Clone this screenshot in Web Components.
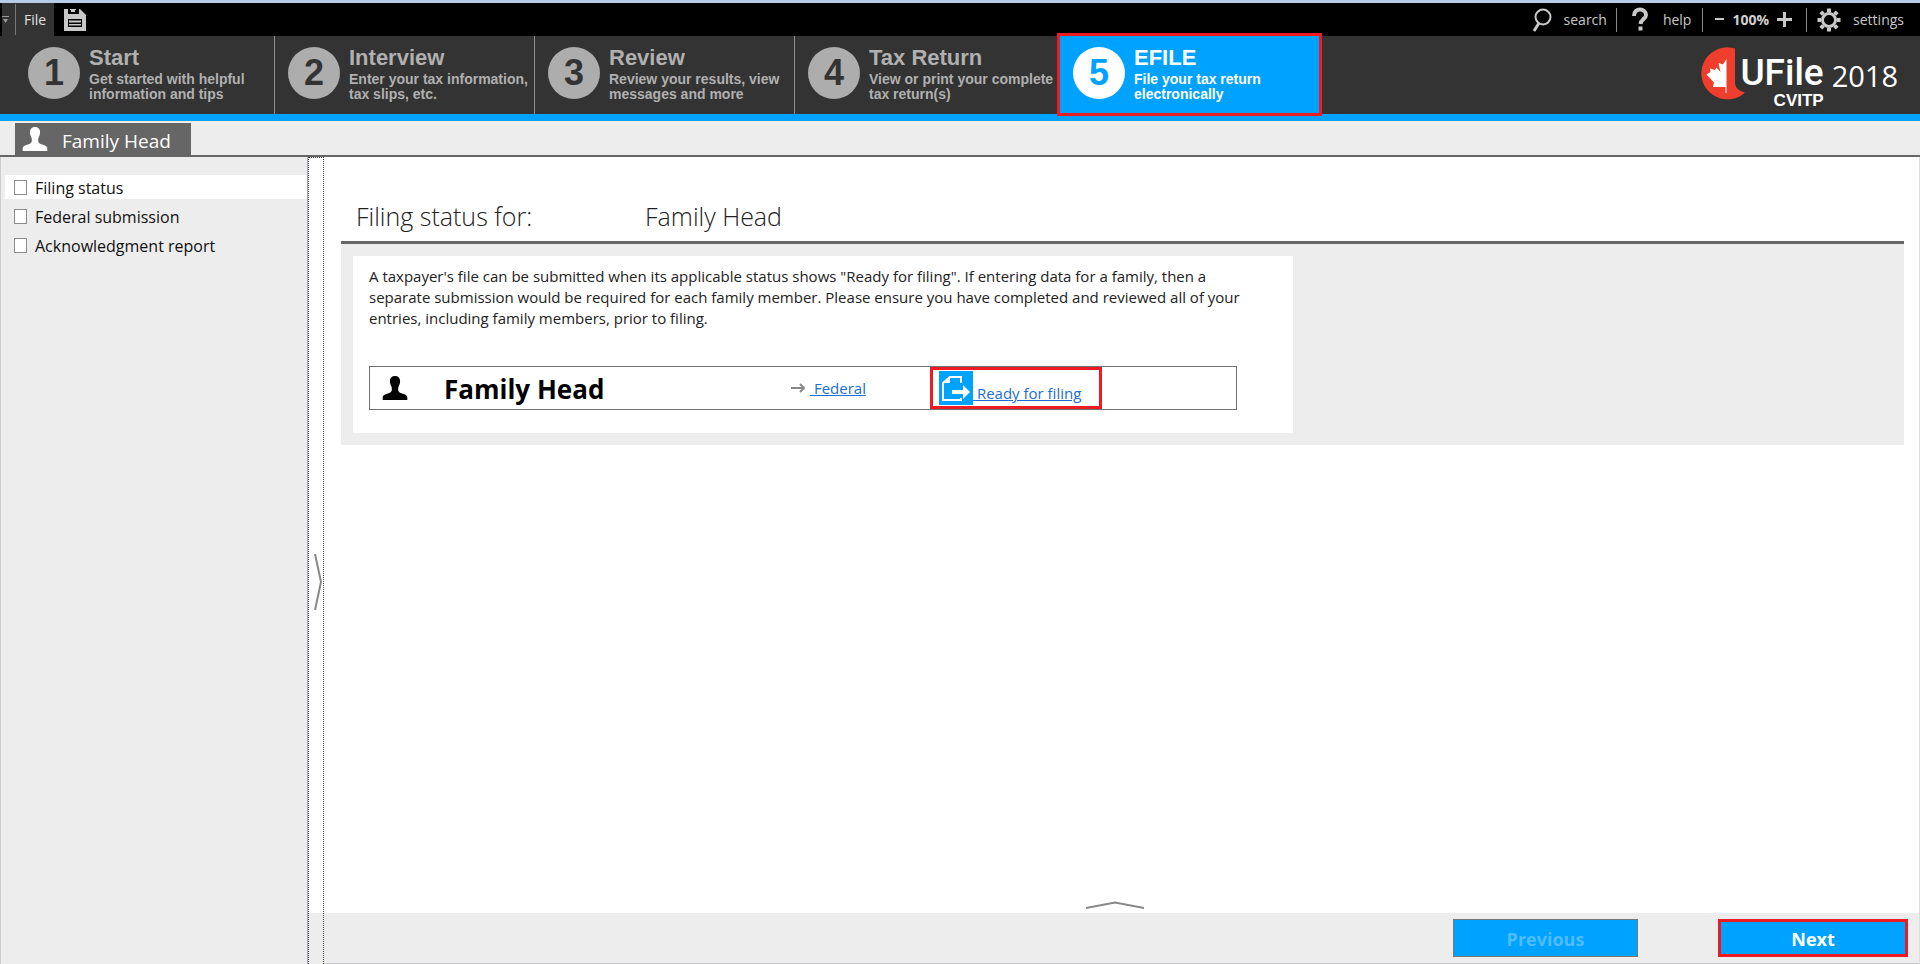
<!DOCTYPE html>
<html lang="en">
<head>
<meta charset="utf-8">
<title>UFile CVITP 2018</title>
<style>
  body { margin: 0; font-family: "Open Sans", "Noto Sans", sans-serif; font-size: 15px; color: #222; background: #fff; }
</style>
</head>
<body>
<ufile-app></ufile-app>

<script>
const define = (name, html) => customElements.define(name, class extends HTMLElement {
  connectedCallback() {
    if (this.shadowRoot) return;
    const template = document.createElement('template');
    template.innerHTML = typeof html === 'function' ? html(this) : html;
    this.attachShadow({ mode: 'open' }).append(template.content.cloneNode(true));
  }
});

/* Head-and-shoulders silhouette, takes the current text colour */
define('person-icon', `
  <style>:host { display: block; width: 26px; height: 26px; } svg { display: block; }</style>
  <svg width="26" height="26" viewBox="0 0 26 26" fill="currentColor" aria-hidden="true">
    <path d="M13 1C9.800 1 7.900 3 7.900 6c0 2 .6 3.700 1.300 5 .5.900.7 2.200.6 4-.1 1.600-1.200 2.500-3.300 3.200C3 19.400.7 20 .7 22.500V25h24.600v-2.500c0-2.500-2.300-3.100-5.800-4.300-2.100-.7-3.200-1.600-3.300-3.200-.1-1.800.1-3.100.6-4 .7-1.300 1.300-3 1.300-5 0-3-1.900-5-5.100-5z"/>
  </svg>`);

define('top-bar', `
  <style>
    :host { display: flex; align-items: center; justify-content: space-between; height: 33px; background: #000; color: #c8c8c8; font-size: 14px; line-height: 20px; border-top: 3px solid #b8cee8; }
    div { display: flex; align-items: center; height: 100%; }
    button { display: flex; align-items: center; border: 0; padding: 0; margin: 0; background: none; color: inherit; font: inherit; height: 31px; }
    .menu { background: #333; margin-left: 2px; }
    .more { width: 14px; height: 31px; border-right: 1px solid #777; }
    .file { padding: 0 8px; color: #e0e0e0; }
    .save { margin-left: 9px; }
    .right { padding-right: 16px; }
    .sep { width: 1px; height: 24px; background: #888; }
    .search { gap: 12px; margin-right: 9px; }
    .help { gap: 14px; margin: 0 11px 0 14px; }
    .zoom { margin: 0 14px 0 12px; gap: 8px; }
    .zoom b { color: #d0d0d0; }
    .settings { gap: 11px; margin-left: 9px; }
    svg { display: block; }
  </style>
  <div>
    <div class="menu">
      <button class="more" aria-label="More"><svg width="10" height="10" viewBox="0 0 10 10" fill="#999"><path d="M0 1h7v1H0zM1 4h5L3.500 8z"/></svg></button>
      <button class="file">File</button>
    </div>
    <button class="save" aria-label="Save">
      <svg width="24" height="24" viewBox="0 0 24 24"><path fill="#c8c8c8" d="M1 1h16l6 6v16H1z"/><path fill="#000" d="M5 1h11v5H5zM5 11h14v8H5z"/><path fill="#c8c8c8" d="M7 1h6v1H7zM8 2h4v2H8zM6 12.500h12v2H6zM6 16h12v1.500H6z"/></svg>
    </button>
  </div>
  <div class="right">
    <button class="search"><svg width="20" height="26" viewBox="0 0 20 26" fill="none" stroke="#c8c8c8"><circle cx="11" cy="10" r="7.500" stroke-width="2"/><path d="M7 16L2 24" stroke-width="3"/></svg>search</button>
    <span class="sep"></span>
    <button class="help"><svg width="18" height="26" viewBox="0 0 18 26" fill="none" stroke="#c8c8c8" stroke-width="4"><path d="M3 9C3 0 15 1 15 8c0 4-5 4-5.500 9"/><path d="M7.500 21.500h4"/></svg>help</button>
    <span class="sep"></span>
    <div class="zoom">
      <button aria-label="Zoom out"><svg width="9" height="15" viewBox="0 0 9 15"><path fill="#c8c8c8" d="M0 6h9v2H0z"/></svg></button>
      <b>100%</b>
      <button aria-label="Zoom in"><svg width="15" height="15" viewBox="0 0 15 15"><path fill="#c8c8c8" d="M6 0h3v6h6v3H9v6H6V9H0V6h6z"/></svg></button>
    </div>
    <span class="sep"></span>
    <button class="settings"><svg width="26" height="24" viewBox="-13 -12 26 24" fill="none" stroke="#c8c8c8"><circle r="6.500" stroke-width="3"/><path stroke-width="4" d="M0-8v-3.500M0 8v3.500M-8 0h-3.500M8 0h3.500M-5.600-5.600l-2.600-2.600M5.600-5.600l2.600-2.600M-5.600 5.600l-2.600 2.600M5.600 5.600l2.600 2.600"/></svg>settings</button>
  </div>`);

define('nav-step', el => `
  <style>
    :host { display: block; flex: 0 1 260px; box-sizing: border-box; border-left: 1px solid #8a8f96; color: #b0b0b0; --disc: #adadad; --digit: #333; }
    :host(:first-child) { border-left-color: transparent; }
    :host([active]) { flex-basis: 259px; margin: 0 0 1px 6px; background: #00a2ff; color: #fff; --disc: #fff; --digit: #00a2ff; border-left-color: #00a2ff; outline: 3px solid #ed1c24; z-index: 1; position: relative; }
    a { display: flex; gap: 9px; height: 100%; box-sizing: border-box; padding: 11px 0 0 13px; color: inherit; text-decoration: none; font-family: "Liberation Sans", Arial, sans-serif; font-weight: bold; }
    :host([active]) a { padding-left: 12px; }
    .num { flex: none; width: 52px; height: 52px; border-radius: 50%; background: var(--disc); color: var(--digit); font-size: 36px; line-height: 52px; text-align: center; }
    .title { display: block; font-size: 22px; line-height: 22px; padding-bottom: 3px; }
    .note { display: block; font-size: 14px; line-height: 15px; }
  </style>
  <a href="#"><span class="num">${el.getAttribute('number')}</span>
  <span><span class="title">${el.getAttribute('label')}</span><span class="note"><slot></slot></span></span></a>`);

define('ufile-logo', `
  <style>
    :host { display: flex; color: #fff; padding-top: 11px; }
    svg { display: block; flex: none; margin-right: -5px; }
    .name { display: flex; flex-direction: column; align-items: flex-end; padding-top: 6px; }
    .brand { font: 500 37px/39px Roboto, sans-serif; }
    .sub { font: bold 17px/17px "Liberation Sans", sans-serif; }
    .year { font-size: 29px; line-height: 40px; padding: 9px 0 0 8px; }
  </style>
  <svg width="46" height="53" viewBox="0 0 46 53" aria-hidden="true">
    <path fill="#f03e2d" d="M36 1.500A26 26 0 1 0 46 45.500Q36 43 36 36z"/>
    <path fill="#fff" d="M27.500 12L24 17.500 19.500 16 21.500 25 17.500 20.500 16 23 11 21.500 11.500 25 7.500 27.500 15 35.500 14 40 26.500 40 26.500 46h1z"/>
  </svg>
  <div class="name"><span class="brand">UFile</span><span class="sub">CVITP</span></div>
  <span class="year">2018</span>`);

define('step-nav', `
  <style>
    :host { display: flex; justify-content: space-between; height: 78px; background: #333; border-bottom: 7px solid #00a2ff; padding: 0 22px 0 14px; }
    nav { display: flex; flex: 1; }
  </style>
  <nav aria-label="Steps">
    <nav-step number="1" label="Start">Get started with helpful information and tips</nav-step>
    <nav-step number="2" label="Interview">Enter your tax information, tax slips, etc.</nav-step>
    <nav-step number="3" label="Review">Review your results, view messages and more</nav-step>
    <nav-step number="4" label="Tax Return">View or print your complete tax return(s)</nav-step>
    <nav-step number="5" label="EFILE" active>File your tax return electronically</nav-step>
  </nav>
  <ufile-logo></ufile-logo>`);

define('member-tabs', `
  <style>
    :host { display: flex; height: 34px; padding-left: 15px; align-items: flex-end; background: #ededed; border-bottom: 2px solid #666; }
    button { display: flex; align-items: center; gap: 14px; width: 176px; height: 32px; padding: 0 0 0 7px; border: 0; background: #666; color: #fff; font: 19px/26px "Open Sans", sans-serif; white-space: nowrap; }
    person-icon { flex: none; }
    span { padding-top: 4px; }
  </style>
  <button><person-icon></person-icon><span>Family Head</span></button>`);

define('check-item', `
  <style>
    :host { display: block; }
    label { display: flex; align-items: center; height: 24px; padding-left: 9px; gap: 8px; font-size: 16px; line-height: 24px; color: #111; }
    :host([selected]) label { background: #fff; }
    input { appearance: none; flex: none; margin: 0; width: 13px; height: 15px; border: 1px solid #8c8c8c; background: #fff; }
    span { padding-top: 1px; }
  </style>
  <label><input type="checkbox"><span><slot></slot></span></label>`);

define('side-menu', `
  <style>
    :host { display: flex; flex-direction: column; gap: 5px; flex: none; width: 302px; padding: 18px 0 0 4px; background: #ededed; border-left: 1px solid #ccc; border-right: 1px solid #a0a6ae; }
  </style>
  <check-item selected>Filing status</check-item>
  <check-item>Federal submission</check-item>
  <check-item>Acknowledgment report</check-item>`);

define('pane-splitter', `
  <style>
    :host { display: flex; flex: none; align-items: center; justify-content: flex-end; width: 14px; border: 1px dotted #444; border-bottom: 0; background: linear-gradient(to top, #ededed 51px, #fff 51px); }
    button { border: 0; padding: 0; margin: 0; background: none; display: block; }
    svg { display: block; }
    .wrap { padding-top: 42px; }
  </style>
  <div class="wrap"><button aria-label="Collapse menu"><svg width="10" height="58" viewBox="0 0 10 58" fill="none" stroke="#888" stroke-width="2"><path d="M2 1L8 29 2 57"/></svg></button></div>`);

define('family-row', `
  <style>
    :host { display: grid; grid-template-columns: 74px 347px 142px 1fr; box-sizing: border-box; width: 868px; max-width: 100%; height: 44px; border: 1px solid #707070; align-items: center; }
    person-icon { color: #000; margin-left: 12px; }
    strong { font-size: 26px; line-height: 36px; padding-top: 2px; color: #000; }
    a { color: #1a6fd0; font-size: 15px; line-height: 20px; }
    .fed { display: flex; align-items: center; gap: 5px; }
    .status { justify-self: start; display: flex; height: 36px; padding: 0 18px 0 6px; text-decoration: none; outline: 3px solid #ed1c24; }
    .status svg { margin-top: 1px; }
    .status span { text-decoration: underline; padding-top: 13px; }
  </style>
  <person-icon></person-icon>
  <strong>Family Head</strong>
  <span class="fed"><svg width="14" height="10" viewBox="0 0 14 10" fill="none" stroke="#888" stroke-width="2"><path d="M0 5h12M9 1l4 4-4 4"/></svg><a href="#">&nbsp;Federal</a></span>
  <a class="status" href="#">
    <svg width="34" height="34" viewBox="0 0 34 34" aria-hidden="true">
      <path fill="#00a2ff" d="M0 0h34v34H0z"/>
      <path fill="none" stroke="#fff" stroke-width="2" d="M22 12V6h-11L4 12v17h18v-2"/>
      <path fill="#fff" d="M11 5v7H3zM13 19h11v-5l7 7-7 7v-5H13z"/>
    </svg><span>&nbsp;Ready for filing</span></a>`);

define('filing-page', `
  <style>
    :host { display: flex; flex: 1; min-width: 0; flex-direction: column; border-right: 1px solid #ddd; }
    main { flex: 1; padding: 37px 15px 0 17px; }
    h1 { display: flex; margin: 0; padding: 5px 0 7px 15px; border-bottom: 3px solid #666; font-weight: 300; font-size: 25px; line-height: 35px; color: #222; }
    h1 span:first-child { width: 289px; }
    .panel { background: #ededed; padding: 12px; }
    .card { box-sizing: border-box; width: 940px; max-width: 100%; height: 177px; background: #fff; padding: 10px 16px; }
    p { margin: 0 0 37px; font-size: 15px; line-height: 21px; max-width: 890px; }
    .up { display: flex; justify-content: center; padding: 0 14px 3px 0; }
    .up button { border: 0; padding: 0; background: none; }
    svg { display: block; }
    footer { display: flex; justify-content: flex-end; gap: 80px; height: 38px; padding: 6px 11px 6px 0; background: #ededed; border-bottom: 1px solid #c8c8cc; }
    footer button { box-sizing: border-box; height: 38px; background: #00a2ff; color: #fff; font: bold 18px/24px "Open Sans", sans-serif; padding: 2px 0 0; }
    .prev { width: 185px; border: 1px solid #777; color: #4dbdff; }
    .next { width: 190px; border: 3px solid #ed1c24; }
  </style>
  <main>
    <h1><span>Filing status for:</span><span>Family Head</span></h1>
    <div class="panel"><div class="card">
      <p>A taxpayer's file can be submitted when its applicable status shows "Ready for filing". If entering data for a family, then a separate submission would be required for each family member. Please ensure you have completed and reviewed all of your entries, including family members, prior to filing.</p>
      <family-row></family-row>
    </div></div>
  </main>
  <div class="up"><button aria-label="Expand panel"><svg width="58" height="9" viewBox="0 0 58 9" fill="none" stroke="#888" stroke-width="2"><path d="M0 7L29 1.500 58 7"/></svg></button></div>
  <footer><button class="prev" disabled>Previous</button><button class="next">Next</button></footer>`);

define('ufile-app', `
  <style>
    :host { display: flex; flex-direction: column; min-height: 100vh; }
    .body { display: flex; flex: 1; }
  </style>
  <top-bar></top-bar>
  <step-nav></step-nav>
  <member-tabs></member-tabs>
  <div class="body"><side-menu></side-menu><pane-splitter></pane-splitter><filing-page></filing-page></div>`);
</script>
</body>
</html>
